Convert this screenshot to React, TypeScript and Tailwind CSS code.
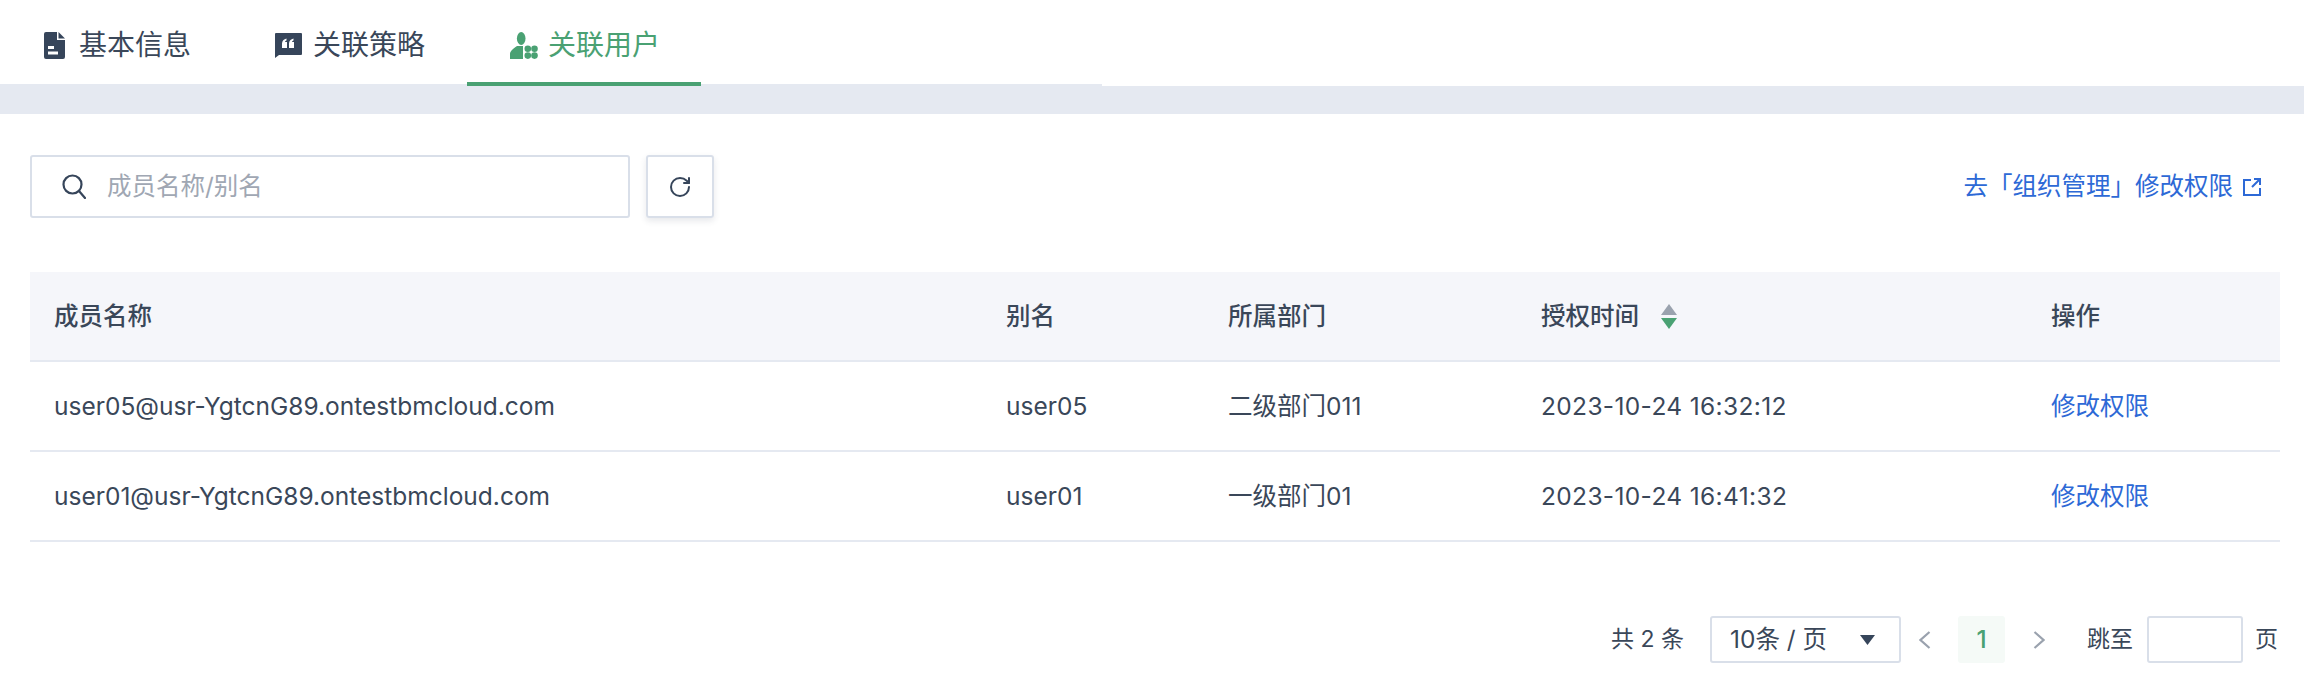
import React from 'react';
import { RotateCw } from 'lucide-react';

const font = "font-['Inter','Noto_Sans_CJK_SC',sans-serif]";

const FileIcon = () => (
  <svg width="21" height="27" viewBox="0 0 21 27" fill="#36455a">
    <path d="M2 0h11v8h8v17a2 2 0 0 1-2 2H2a2 2 0 0 1-2-2V2a2 2 0 0 1 2-2z" />
    <path d="M14.500 0L21 6.500h-6.500z" />
    <rect x="4" y="14" width="6" height="3" fill="#fff" />
    <rect x="4" y="19.500" width="10" height="3" fill="#fff" />
  </svg>
);

const QuoteIcon = () => (
  <svg width="27" height="25" viewBox="0 0 27 25" fill="#36455a">
    <path d="M1 0h25a1 1 0 0 1 1 1v20a1 1 0 0 1-1 1H4l-4 3V1a1 1 0 0 1 1-1z" />
    <path d="M7 11.500c0-3 1-5 4.500-6v2c-1 .4-1.500 1-1.500 1.500h2v6H7zM14 11.500c0-3 1-5 4.500-6v2c-1 .4-1.500 1-1.500 1.500h2v6h-5z" fill="#fff" />
  </svg>
);

const UserIcon = () => (
  <svg width="28" height="27" viewBox="0 0 28 27" fill="#4aa173">
    <ellipse cx="11.200" cy="6.500" rx="4.300" ry="6.500" />
    <path d="M7 14h6v13H0v-5c0-3 3-5 7-8z" />
    <circle cx="17.800" cy="16.800" r="3.300" />
    <circle cx="24.500" cy="16.800" r="3.300" />
    <circle cx="17.800" cy="23.600" r="3.300" />
    <circle cx="24.500" cy="23.600" r="3.300" />
  </svg>
);

const SearchIcon = () => (
  <svg width="24" height="25" viewBox="0 0 24 25" fill="none" stroke="#36455a" strokeWidth="2.200" strokeLinecap="round">
    <circle cx="10.500" cy="10.500" r="9" />
    <path d="M17 17l6 7" />
  </svg>
);

const ExternalIcon = () => (
  <svg width="18" height="18" viewBox="0 0 18 18" fill="none" stroke="#2d69d6" strokeWidth="2">
    <path d="M8 2H1v15h16v-7" />
    <path d="M9 9l7-7M11 1h6v6" />
  </svg>
);

const Chevron = ({ flip }: { flip?: boolean }) => (
  <svg width="12" height="18" viewBox="0 0 12 18" fill="none" stroke="#9aa2ae" strokeWidth="2.200">
    <path d={flip ? 'M1.500 1l9 8-9 8' : 'M10.500 1l-9 8 9 8'} />
  </svg>
);

const rows = [
  { name: 'user05@usr-YgtcnG89.ontestbmcloud.com', alias: 'user05', dept: '二级部门011', time: '2023-10-24 16:32:12' },
  { name: 'user01@usr-YgtcnG89.ontestbmcloud.com', alias: 'user01', dept: '一级部门01', time: '2023-10-24 16:41:32' },
];

const cell = 'pl-6 flex items-center';

export default function App() {
  return (
    <div className={`${font} w-[2304px] h-[676px] bg-white text-[#3a4759] overflow-hidden`}>
      <div className="flex w-[1102px] h-[86px] border-b-2 border-[#e5e9f1]">
        <div className="flex items-center gap-[14px] w-[233px] pl-[44px] pt-[6px] text-[28px]">
          <FileIcon />
          <span>基本信息</span>
        </div>
        <div className="flex items-center gap-[11px] w-[234px] pl-[42px] pt-[6px] text-[28px]">
          <QuoteIcon />
          <span>关联策略</span>
        </div>
        <div className="flex items-center gap-[10px] w-[234px] h-[86px] pl-[43px] pt-[8px] text-[28px] text-[#4aa173] border-b-4 border-[#4aa173]">
          <UserIcon />
          <span>关联用户</span>
        </div>
      </div>
      <div className="h-[28px] bg-[#e5e9f1]" />

      <div className="flex items-center justify-between mt-[41px] pl-[30px] pr-[43px]">
        <div className="flex gap-[16px]">
          <div className="flex items-center w-[600px] h-[63px] border-2 border-[#d9dfe9] rounded-[3px] pl-[30px]">
            <SearchIcon />
            <span className="ml-[21px] text-[24.5px] text-[#a0a7b3]">成员名称/别名</span>
          </div>
          <div className="flex items-center justify-center w-[68px] h-[63px] border-2 border-[#d9dfe9] rounded-[3px] shadow-[0_3px_6px_rgba(54,69,90,0.12)]">
            <RotateCw size={24} strokeWidth={2} className="text-[#36455a]" />
          </div>
        </div>
        <div className="flex items-center gap-[10px] text-[24.5px] text-[#2d69d6]">
          <span>去「组织管理」修改权限</span>
          <ExternalIcon />
        </div>
      </div>

      <div className="mx-[30px] w-[2250px] mt-[54px]">
        <div className="grid grid-cols-[952px_222px_313px_510px_253px] h-[90px] bg-[#f5f6fa] border-b-2 border-[#e5e9f1] text-[24.5px] font-medium">
          <div className={cell}>成员名称</div>
          <div className={cell}>别名</div>
          <div className={cell}>所属部门</div>
          <div className={`${cell} gap-[22px]`}>
            <span>授权时间</span>
            <svg width="16" height="25" viewBox="0 0 16 25">
              <path d="M8 0l8 11H0z" fill="#9aa2ae" />
              <path d="M8 25L0 14h16z" fill="#4aa173" />
            </svg>
          </div>
          <div className={cell}>操作</div>
        </div>
        {rows.map((r) => (
          <div key={r.name} className="grid grid-cols-[952px_222px_313px_510px_253px] h-[90px] border-b-2 border-[#e5e9f1] text-[24.5px]">
            <div className={cell}>{r.name}</div>
            <div className={cell}>{r.alias}</div>
            <div className={cell}>{r.dept}</div>
            <div className={`${cell} tracking-[0.35px]`}>{r.time}</div>
            <div className={`${cell} text-[#2d69d6]`}>修改权限</div>
          </div>
        ))}
      </div>

      <div className="flex items-center justify-end mt-[74px] pr-[26px] text-[23px]">
        <span>共 2 条</span>
        <div className="flex items-center justify-between w-[191px] h-[47px] ml-[26px] pl-[18px] pr-[24px] border-2 border-[#d9dfe9] rounded-[3px] text-[24.5px]">
          <span>10条 / 页</span>
          <svg width="15" height="10" viewBox="0 0 15 10"><path d="M0 0h15l-7.500 10z" fill="#36455a" /></svg>
        </div>
        <div className="ml-[18px]"><Chevron /></div>
        <div className="flex items-center justify-center w-[47px] h-[47px] ml-[27px] rounded-[3px] bg-[#f5faf7] text-[#4aa173] font-medium text-[24.5px]">1</div>
        <div className="ml-[28px]"><Chevron flip /></div>
        <span className="ml-[42px]">跳至</span>
        <div className="w-[96px] h-[47px] ml-[14px] border-2 border-[#d9dfe9] rounded-[3px]" />
        <span className="ml-[12px]">页</span>
      </div>
    </div>
  );
}
